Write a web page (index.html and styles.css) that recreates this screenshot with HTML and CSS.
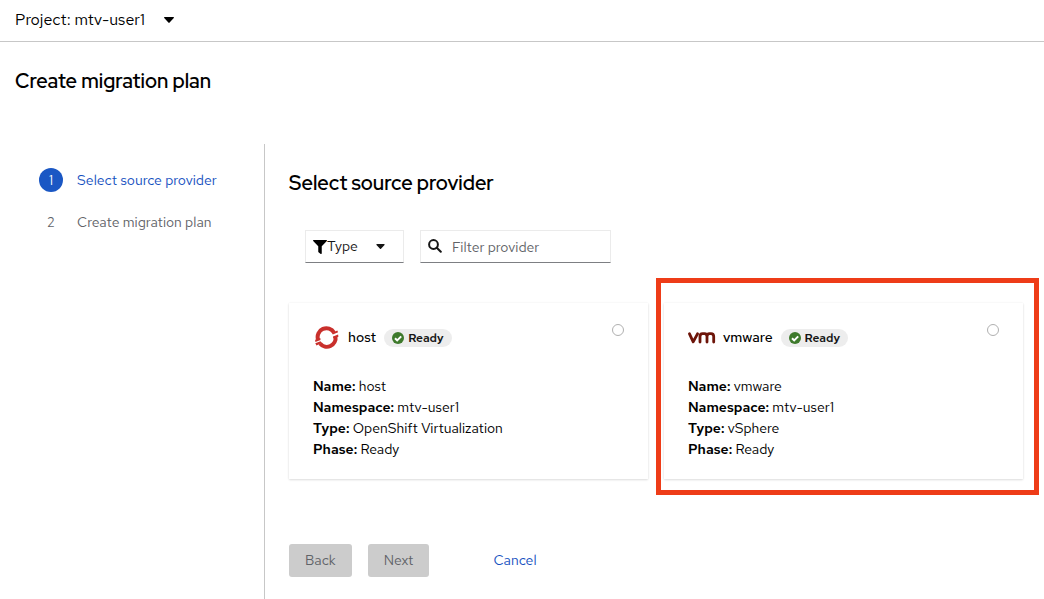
FILE: index.html
```html
<!DOCTYPE html>
<html lang="en">
<head>
<meta charset="utf-8">
<meta name="viewport" content="width=device-width, initial-scale=1">
<title>Create migration plan</title>
<link rel="stylesheet" href="styles.css">
</head>
<body>
<header class="project-bar">
  <button class="project-toggle" type="button">Project: mtv-user1
    <svg class="caret caret-large" viewBox="0 0 10 6" aria-hidden="true"><path d="M.7 0h8.6c.6 0 .9.7.5 1.1L5.6 5.6a.8.8 0 0 1-1.2 0L.2 1.1C-.2.7.1 0 .7 0z"/></svg>
  </button>
</header>
<h1 class="page-title">Create migration plan</h1>
<div class="wizard">
  <nav class="steps" aria-label="Wizard steps">
    <ol class="step-list">
      <li><a class="step step-current" href="#source" aria-current="step"><span class="step-number">1</span>Select source provider</a></li>
      <li><a class="step" href="#plan"><span class="step-number">2</span>Create migration plan</a></li>
    </ol>
  </nav>
  <main class="content" id="source">
    <h2 class="section-title">Select source provider</h2>
    <div class="toolbar">
      <button class="type-filter" type="button">
        <svg class="filter-icon" viewBox="0 0 512 512" aria-hidden="true"><path d="M488 0H24C2.700 0-8 25.900 7 41l185 185v206c0 8 4 15 10 20l80 56c16 11 38 0 38-20V226L505 41c15-15 4-41-17-41z"/></svg>Type
        <svg class="caret" viewBox="0 0 10 6" aria-hidden="true"><path d="M.7 0h8.600c.6 0 .9.7.5 1.100L5.600 5.600a.8.8 0 0 1-1.200 0L.2 1.100C-.2.7.1 0 .7 0z"/></svg>
      </button>
      <label class="search">
        <svg class="search-icon" viewBox="0 0 14 14" aria-hidden="true"><circle cx="5.500" cy="5.500" r="4.400"/><path d="M8.800 8.800l4 4"/></svg>
        <input class="search-input" type="search" placeholder="Filter provider" aria-label="Filter provider">
      </label>
    </div>
    <div class="cards">
      <article class="card">
        <div class="card-header">
          <svg class="logo" viewBox="0 0 28 24" aria-hidden="true">
            <g fill="none" stroke="#c9302c" stroke-width="4"><path d="M5 13.500A8.800 8.800 0 0 1 21 6.500"/><path d="M22.500 10.500A8.800 8.800 0 0 1 7 17.500"/></g>
            <path fill="#c9302c" d="M19 7l5.300-2.600.8 1.800-5.300 2.300zM20 10.600l5.100-2.200.3 2.300-5.100 1.800zM2.100 13.800l5.200-1.800.2 2-5.100 1.900zM2.300 17.300l5.300-2 .9 1.800-5 2.300z"/>
          </svg>
          <label class="card-title" for="provider-host">host</label>
          <span class="badge"><svg class="badge-icon" viewBox="0 0 12 12" aria-hidden="true"><circle cx="6" cy="6" r="6"/><path d="M3 6.200l2.200 2.200L9.200 4.400"/></svg>Ready</span>
          <input class="card-radio" type="radio" name="provider" id="provider-host">
        </div>
        <dl class="details">
          <div><dt>Name:</dt> <dd>host</dd></div>
          <div><dt>Namespace:</dt> <dd>mtv-user1</dd></div>
          <div><dt>Type:</dt> <dd>OpenShift Virtualization</dd></div>
          <div><dt>Phase:</dt> <dd>Ready</dd></div>
        </dl>
      </article>
      <article class="card card-highlighted">
        <div class="card-header">
          <svg class="logo" viewBox="0 0 28 24" aria-hidden="true">
            <path fill="none" stroke="#6d1409" stroke-width="2.800" stroke-linecap="round" stroke-linejoin="round" d="M1.500 7.800L5.200 15.800 9.500 7.800M12 16V10.500Q12 7.600 14.500 7.600H16.500Q19 7.600 19 10.500V16M19 10.500Q19 7.600 21.500 7.600H23Q25.700 7.600 25.700 10.500V16"/>
          </svg>
          <label class="card-title" for="provider-vmware">vmware</label>
          <span class="badge"><svg class="badge-icon" viewBox="0 0 12 12" aria-hidden="true"><circle cx="6" cy="6" r="6"/><path d="M3 6.200l2.200 2.200L9.200 4.400"/></svg>Ready</span>
          <input class="card-radio" type="radio" name="provider" id="provider-vmware">
        </div>
        <dl class="details">
          <div><dt>Name:</dt> <dd>vmware</dd></div>
          <div><dt>Namespace:</dt> <dd>mtv-user1</dd></div>
          <div><dt>Type:</dt> <dd>vSphere</dd></div>
          <div><dt>Phase:</dt> <dd>Ready</dd></div>
        </dl>
      </article>
    </div>
    <footer class="actions">
      <button class="button" type="button" disabled>Back</button>
      <button class="button" type="button" disabled>Next</button>
      <button class="button button-link" type="button">Cancel</button>
    </footer>
  </main>
</div>
</body>
</html>
```
FILE: styles.css
```css
* { box-sizing: border-box; }

body {
  margin: 0;
  min-height: 100vh;
  display: flex;
  flex-direction: column;
  background: #fff;
  color: #000;
  font: 14px/21px "Red Hat Text", Inter, Roboto, sans-serif;
}

button, input { font: inherit; color: inherit; }
button { cursor: pointer; }
h1, h2, ol, dl, dd { margin: 0; padding: 0; }

.project-bar {
  height: 42px;
  padding: 0 15px 2px;
  display: flex;
  align-items: center;
  border-bottom: 1px solid #c7c7c7;
}

.project-toggle {
  display: flex;
  align-items: center;
  gap: 19px;
  padding: 0;
  border: 0;
  background: none;
  font-size: 16px;
}

.caret { width: 9px; height: 5px; fill: #151515; }
.caret-large { width: 10px; height: 6px; fill: #000; }

.page-title, .section-title {
  font-family: "Red Hat Display", "Red Hat Text", Inter, Roboto, sans-serif;
  font-size: 20px;
  line-height: 26px;
  font-weight: 600;
}
.page-title { padding: 26px 15px 50px; }

.wizard { flex: 1; display: flex; }

.steps {
  flex: 0 0 265px;
  padding: 24px;
  border-right: 1px solid #c7c7c7;
}
.step-list {
  display: grid;
  gap: 18px;
  padding-left: 15px;
  list-style: none;
}
.step {
  display: flex;
  align-items: center;
  gap: 14px;
  line-height: 24px;
  color: #5f6368;
  text-decoration: none;
}
.step-number {
  width: 24px;
  height: 24px;
  border-radius: 50%;
  font-size: 13px;
  line-height: 25px;
  text-align: center;
}
.step-current { color: #1450c0; }
.step-current .step-number { background: #1a57c4; color: #fff; }

.content {
  flex: 1;
  min-width: 0;
  padding: 26px 21px 22px 24px;
}

.toolbar { display: flex; gap: 16px; padding: 34px 16px 40px; }

.type-filter, .search {
  display: flex;
  align-items: center;
  height: 33px;
  border: 1px solid #ebebeb;
  border-bottom-color: #7d7f83;
  background: #fff;
  color: #151515;
}
.type-filter { width: 99px; padding: 0 18px 0 7px; }
.type-filter .caret { margin-left: auto; }
.filter-icon { width: 14px; height: 14px; }
.search { width: 191px; padding: 0 7px; gap: 10px; }
.search-icon {
  flex: none;
  width: 14px;
  height: 14px;
  margin-bottom: 2px;
  fill: none;
  stroke: #151515;
  stroke-width: 2;
  stroke-linecap: round;
}
.search-input {
  min-width: 0;
  flex: 1;
  padding: 2px 0 0;
  border: 0;
  outline: 0;
  background: none;
}
.search-input::placeholder { color: #5f6368; opacity: 1; }

.cards { display: grid; grid-template-columns: 1fr 1fr; gap: 16px; }

.card {
  position: relative;
  padding: 22px 24px 19px;
  box-shadow: 0 1px 2px rgba(3, 3, 3, .12), 0 0 2px rgba(3, 3, 3, .06);
}
.card-highlighted::after {
  content: "";
  position: absolute;
  inset: -25px -16px -16px -8px;
  border: 5px solid #ee3c18;
  pointer-events: none;
}
.card-header { display: flex; align-items: center; height: 25px; }
.logo { width: 28px; height: 24px; margin-right: 7px; }
.card-title { margin-right: 8px; font-weight: 500; }
.badge {
  display: flex;
  align-items: center;
  gap: 4px;
  height: 18px;
  padding: 0 8px;
  border-radius: 9px;
  background: #ededed;
  color: #151515;
  font-size: 12px;
  line-height: 18px;
  font-weight: 600;
}
.badge-icon { width: 12px; height: 12px; fill: #3e7a2c; }
.badge-icon path { fill: none; stroke: #fff; stroke-width: 2; }
.card-radio {
  appearance: none;
  align-self: flex-start;
  width: 12px;
  height: 12px;
  margin: -1px 0 0 auto;
  border: 1px solid #b0b0b0;
  border-radius: 50%;
  background: #fff;
}
.card-radio:checked { border: 4px solid #1a57c4; }

.details { padding-top: 26px; }
.details dt, .details dd { display: inline; }
.details dt { font-weight: 600; }

.actions { display: flex; gap: 16px; padding-top: 65px; }
.button {
  height: 33px;
  padding: 0 16px;
  border: 0;
  border-radius: 3px;
}
.button:disabled { background: #ccc; color: #5f6368; cursor: default; }
.button-link { margin-left: 32px; background: none; color: #1450c0; }
```
